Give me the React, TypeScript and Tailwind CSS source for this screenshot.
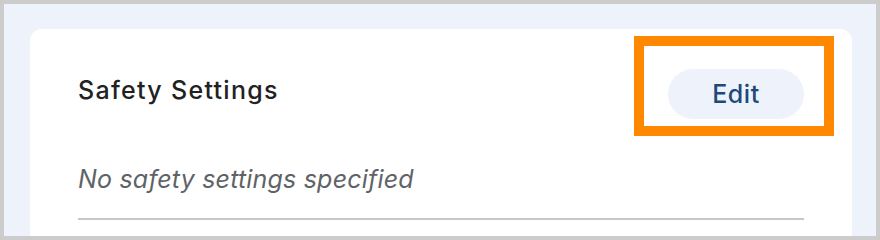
import React from 'react';

const App: React.FC = () => {
  return (
    <div
      className="relative w-[880px] h-[240px] overflow-hidden border-4 border-[#cccccc] bg-[#eef3fb] pt-[25px] pl-[26px] pr-[24px]"
      style={{ fontFamily: 'Inter, "Noto Sans", sans-serif' }}
    >
      <div className="h-[240px] rounded-xl bg-white px-12 pt-10">
        <div className="flex items-start justify-between">
          <h2 className="mt-[6px] text-[25px] leading-[30px] font-medium tracking-[1.3px] text-[#222222]">
            Safety Settings
          </h2>
          <button className="flex h-[50px] w-[136px] items-center justify-center rounded-full bg-[#eef3fb] text-[25px] leading-[30px] font-medium tracking-[0.6px] text-[#1d4a7c]">
            Edit
          </button>
        </div>
        <p className="mt-[45px] text-[25px] leading-[30px] italic tracking-[0.2px] text-[#5f6368]">
          No safety settings specified
        </p>
        <div className="mt-[24px] h-[2px] bg-[#c4c7cc]" />
      </div>

      {/* highlight box over the edit button */}
      <div className="absolute left-[630px] top-[32px] h-[100px] w-[200px] border-[10px] border-[#ff8800]" />
    </div>
  );
};

export default App;
